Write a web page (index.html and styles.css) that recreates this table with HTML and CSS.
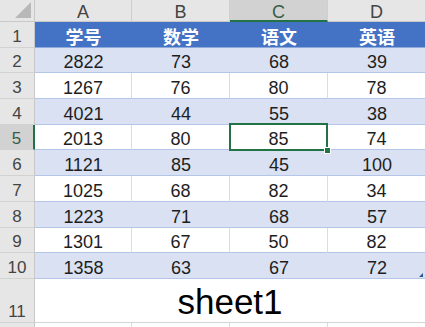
FILE: index.html
```html
<!DOCTYPE html>
<html>
<head>
<meta charset="utf-8">
<link rel="stylesheet" href="styles.css">
</head>
<body>
<div class="sheet">
  <div class="corner"><span class="tri"></span></div>
  <div class="ch">A</div><div class="ch">B</div><div class="ch cur">C</div><div class="ch">D</div>

  <div class="rh">1</div>
  <div class="c th">学号</div><div class="c th">数学</div><div class="c th">语文</div><div class="c th">英语</div>

  <div class="rh">2</div>
  <div class="c b">2822</div><div class="c b">73</div><div class="c b">68</div><div class="c b">39</div>

  <div class="rh">3</div>
  <div class="c w">1267</div><div class="c w">76</div><div class="c w">80</div><div class="c w">78</div>

  <div class="rh">4</div>
  <div class="c b">4021</div><div class="c b">44</div><div class="c b">55</div><div class="c b">38</div>

  <div class="rh cur">5</div>
  <div class="c w">2013</div><div class="c w">80</div><div class="c w sel">85</div><div class="c w">74</div>

  <div class="rh">6</div>
  <div class="c b">1121</div><div class="c b">85</div><div class="c b">45</div><div class="c b">100</div>

  <div class="rh">7</div>
  <div class="c w">1025</div><div class="c w">68</div><div class="c w">82</div><div class="c w">34</div>

  <div class="rh">8</div>
  <div class="c b">1223</div><div class="c b">71</div><div class="c b">68</div><div class="c b">57</div>

  <div class="rh">9</div>
  <div class="c w">1301</div><div class="c w">67</div><div class="c w">50</div><div class="c w">82</div>

  <div class="rh">10</div>
  <div class="c b">1358</div><div class="c b">63</div><div class="c b">67</div><div class="c b last">72</div>

  <div class="rh">11</div>
  <div class="merged">sheet1</div>

  <div class="rh"></div>
  <div class="c e"></div><div class="c e"></div><div class="c e"></div><div class="c e"></div>
</div>
</body>
</html>
```
FILE: styles.css
```css
html, body {
  margin: 0;
  padding: 0;
  background: #ffffff;
  overflow: hidden;
}

.sheet {
  display: grid;
  grid-template-columns: 35px 97px 98px 98px 98px;
  grid-template-rows: 22px repeat(10, 25.7px) 44px 20px;
  width: 426px;
  font-family: "Liberation Sans", "Noto Sans CJK SC", sans-serif;
}

.corner {
  background: #e6e6e6;
  border-right: 1px solid #c8c8c8;
  border-bottom: 1px solid #c8c8c8;
  box-sizing: border-box;
  position: relative;
}

.tri {
  position: absolute;
  right: 3px;
  bottom: 3px;
  width: 0;
  height: 0;
  border-left: 16px solid transparent;
  border-bottom: 16px solid #b8b8b8;
}

.ch {
  background: #e6e6e6;
  border-right: 1px solid #cfcfcf;
  border-bottom: 1px solid #c8c8c8;
  box-sizing: border-box;
  display: flex;
  align-items: flex-end;
  justify-content: center;
  font-size: 18px;
  line-height: 16px;
  padding-bottom: 1px;
  color: #444444;
}

.ch.cur {
  background: #d2d2d2;
  border-bottom: 2px solid #217346;
  color: #355e45;
  padding-bottom: 0;
}

.rh {
  background: #e6e6e6;
  border-right: 1px solid #c8c8c8;
  border-bottom: 1px solid #d2d2d2;
  box-sizing: border-box;
  display: flex;
  align-items: flex-end;
  justify-content: center;
  font-size: 17px;
  line-height: 16px;
  padding-bottom: 2px;
  color: #444444;
}

.rh.cur {
  background: #d2d2d2;
  border-right: 2px solid #217346;
  color: #355e45;
}

.c {
  box-sizing: border-box;
  display: flex;
  align-items: flex-end;
  justify-content: center;
  font-size: 18px;
  line-height: 16px;
  padding-bottom: 2px;
  color: #1e1e1e;
  border-bottom: 1px solid #b4c6e7;
}

.th {
  background: #4472c4;
  color: #ffffff;
  font-family: "Noto Sans CJK SC", sans-serif;
  font-weight: 700;
  font-size: 18px;
  line-height: 20px;
  padding-bottom: 1px;
  border-bottom: 1px solid #8eaadb;
}

.b {
  background: #d9e1f2;
}

.w {
  background: #ffffff;
  border-right: 1px solid #dcdcdc;
}

.e {
  background: #ffffff;
  border-right: 1px solid #dcdcdc;
  border-bottom: none;
}

.sel {
  position: relative;
}

.sel::after {
  content: "";
  position: absolute;
  left: -1px;
  top: -2px;
  right: -1px;
  bottom: -2px;
  border: 2px solid #217346;
}

.sel::before {
  content: "";
  position: absolute;
  right: -4px;
  bottom: -5px;
  width: 5px;
  height: 5px;
  background: #217346;
  border: 1px solid #ffffff;
  z-index: 2;
}

.last {
  position: relative;
}

.last::after {
  content: "";
  position: absolute;
  right: 3px;
  bottom: 1px;
  width: 0;
  height: 0;
  border-left: 4px solid transparent;
  border-bottom: 4px solid #2f5597;
}

.merged {
  grid-column: 2 / 6;
  background: #ffffff;
  border-bottom: 1px solid #d4d4d4;
  box-sizing: border-box;
  display: flex;
  align-items: flex-end;
  justify-content: center;
  font-size: 35px;
  line-height: 40px;
  color: #000000;
  padding-right: 1px;
}
```
